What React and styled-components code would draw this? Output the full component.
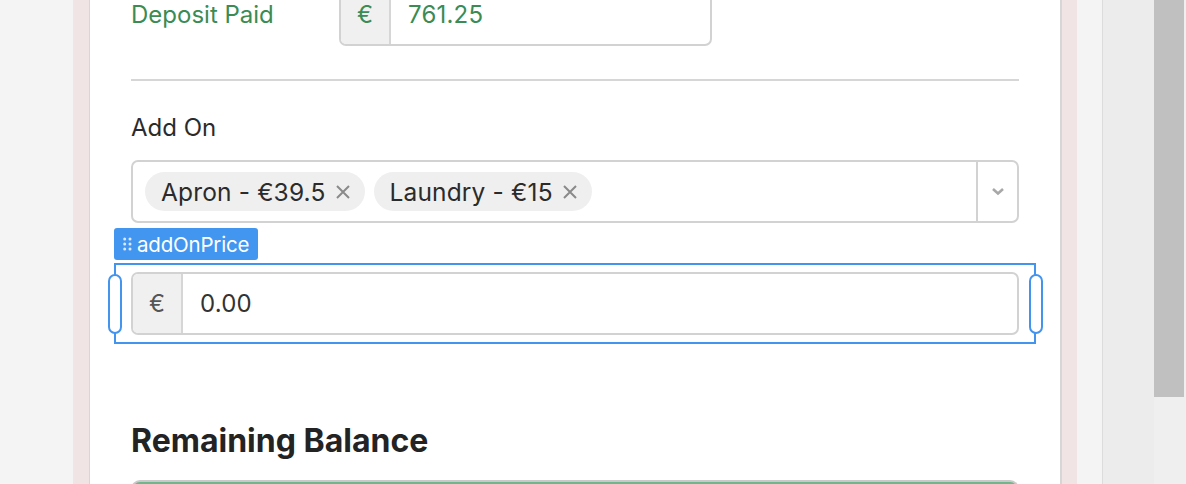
import React from "react";
import styled, { createGlobalStyle } from "styled-components";

const GlobalStyle = createGlobalStyle`
  html, body {
    margin: 0;
    padding: 0;
    background: #f4f4f4;
    overflow: hidden;
  }
  * {
    box-sizing: border-box;
  }
`;

const Page = styled.div`
  display: flex;
  width: 1186px;
  height: 484px;
  overflow: hidden;
  font-family: Inter, "Noto Sans", sans-serif;
  color: #2b2b2b;
`;

const Gutter = styled.div`
  flex: 0 0 ${props => props.width}px;
  background: #f4f4f4;
`;

const Frame = styled.div`
  display: flex;
  flex: 0 0 1004px;
  padding: 0 15px 0 16px;
  background: #f0e4e4;
`;

const Card = styled.div`
  flex: 1;
  background: #ffffff;
  border-left: 1px solid #d6d6d6;
  border-right: 2px solid #d6d6d6;
  padding: 0 41px;
  overflow: hidden;
`;

const Content = styled.div`
  width: 888px;
  margin-top: -17px;
`;

const SidePanel = styled.div`
  flex: 0 0 52px;
  background: #ececec;
  border-left: 1px solid #dcdcdc;
`;

const ScrollTrack = styled.div`
  flex: 0 0 32px;
  display: flex;
  flex-direction: column;
  background: #efefef;
  padding-right: 2px;
`;

const ScrollThumb = styled.div`
  height: 397px;
  background: #c0c0c0;
`;

const Row = styled.div`
  display: flex;
  align-items: center;
`;

const RowLabel = styled.div`
  flex: 0 0 208px;
  font-size: 24px;
  color: ${props => (props.success ? "#3b8b52" : "#2b2b2b")};
`;

const InputGroup = styled.div`
  display: flex;
  height: 63px;
  width: ${props => props.width || "100%"};
  border: 2px solid #d2d2d2;
  border-radius: 7px;
  overflow: hidden;
  background: #fff;
  font-size: 24px;
  color: ${props => (props.success ? "#3b8b52" : "#333333")};
`;

const Prefix = styled.div`
  flex: 0 0 50px;
  display: flex;
  align-items: center;
  justify-content: center;
  background: #f0f0f0;
  border-right: 2px solid #d6d6d6;
  color: ${props => (props.success ? "#3b8b52" : "#555555")};
`;

const Value = styled.div`
  display: flex;
  align-items: center;
  padding-left: 17px;
  letter-spacing: 0.2px;
`;

const Divider = styled.hr`
  border: none;
  height: 2px;
  background: #d6d6d6;
  margin: 33px 0 0 0;
`;

const FieldLabel = styled.div`
  margin-top: 33px;
  font-size: 24px;
  line-height: 28px;
  color: #2b2b2b;
`;

const Select = styled.div`
  margin-top: 18px;
  display: flex;
  height: 63px;
  border: 2px solid #d2d2d2;
  border-radius: 7px;
  background: #fff;
`;

const Tags = styled.div`
  flex: 1;
  display: flex;
  align-items: center;
  gap: 9px;
  padding-left: 12px;
`;

const Tag = styled.div`
  display: flex;
  align-items: center;
  height: 39px;
  padding: 0 14px 0 16px;
  gap: 9px;
  border-radius: 20px;
  background: #efefef;
  font-size: 24.5px;
  letter-spacing: 0.15px;
  color: #2b2b2b;
`;

const Remove = styled.span`
  display: flex;
  color: #8a8a8a;
`;

const Toggle = styled.div`
  flex: 0 0 41px;
  display: flex;
  align-items: center;
  justify-content: center;
  border-left: 2px solid #d2d2d2;
`;

const Selected = styled.div`
  position: relative;
  margin: 40px -17px 0 -17px;
  padding: 7px 15px;
  border: 2px solid #4394ef;
`;

const Badge = styled.div`
  position: absolute;
  left: -2px;
  top: -37px;
  height: 32px;
  display: flex;
  align-items: center;
  gap: 5px;
  padding: 0 9px 0 9px;
  background: #4396f0;
  border-radius: 3px;
  color: #ffffff;
  font-size: 20.5px;
  letter-spacing: -0.2px;
`;

const Handle = styled.div`
  position: absolute;
  top: 50%;
  ${props => (props.side === "left" ? "left: -8px;" : "right: -9px;")}
  width: 14px;
  height: 60px;
  margin-top: -30px;
  border: 2px solid #4394ef;
  border-radius: 7px;
  background: #ffffff;
`;

const Heading = styled.h2`
  margin: 79px 0 0 0;
  font-size: 32px;
  line-height: 36px;
  font-weight: 700;
  color: #232323;
`;

const Balance = styled.div`
  margin-top: 21px;
  height: 40px;
  border: 2px solid #c9c9c9;
  border-bottom: none;
  border-radius: 9px 9px 0 0;
  background: #6db78a;
`;

const CloseIcon = () => (
  <svg width="16" height="16" viewBox="0 0 16 16">
    <path d="M2 2 L14 14 M14 2 L2 14" stroke="currentColor" strokeWidth="2" fill="none" />
  </svg>
);

const Chevron = () => (
  <svg width="14" height="9" viewBox="0 0 14 9">
    <path d="M2 2 L7 6.5 L12 2" stroke="#a8a8a8" strokeWidth="2.6" fill="none" />
  </svg>
);

const DragDots = () => (
  <svg width="9" height="14" viewBox="0 0 9 14">
    {[0, 1].map(c =>
      [0, 1, 2].map(r => (
        <circle key={c + "-" + r} cx={1.7 + c * 5.3} cy={2 + r * 5} r="1.5" fill="#dbe9fb" />
      ))
    )}
  </svg>
);

const addOns = [
  { label: "Apron - €39.5" },
  { label: "Laundry - €15" }
];

export default function App() {
  return (
    <>
      <GlobalStyle />
      <Page>
        <Gutter width={73} />
        <Frame>
          <Card>
            <Content>
              <Row>
                <RowLabel success>Deposit Paid</RowLabel>
                <InputGroup width="373px" success>
                  <Prefix success>€</Prefix>
                  <Value>761.25</Value>
                </InputGroup>
              </Row>
              <Divider />
              <FieldLabel>Add On</FieldLabel>
              <Select>
                <Tags>
                  {addOns.map((item, i) => (
                    <Tag key={i}>
                      {item.label}
                      <Remove>
                        <CloseIcon />
                      </Remove>
                    </Tag>
                  ))}
                </Tags>
                <Toggle>
                  <Chevron />
                </Toggle>
              </Select>
              <Selected>
                <Badge>
                  <DragDots />
                  addOnPrice
                </Badge>
                <Handle side="left" />
                <Handle side="right" />
                <InputGroup>
                  <Prefix>€</Prefix>
                  <Value>0.00</Value>
                </InputGroup>
              </Selected>
              <Heading>Remaining Balance</Heading>
              <Balance />
            </Content>
          </Card>
        </Frame>
        <Gutter width={25} />
        <SidePanel />
        <ScrollTrack>
          <ScrollThumb />
        </ScrollTrack>
      </Page>
    </>
  );
}
